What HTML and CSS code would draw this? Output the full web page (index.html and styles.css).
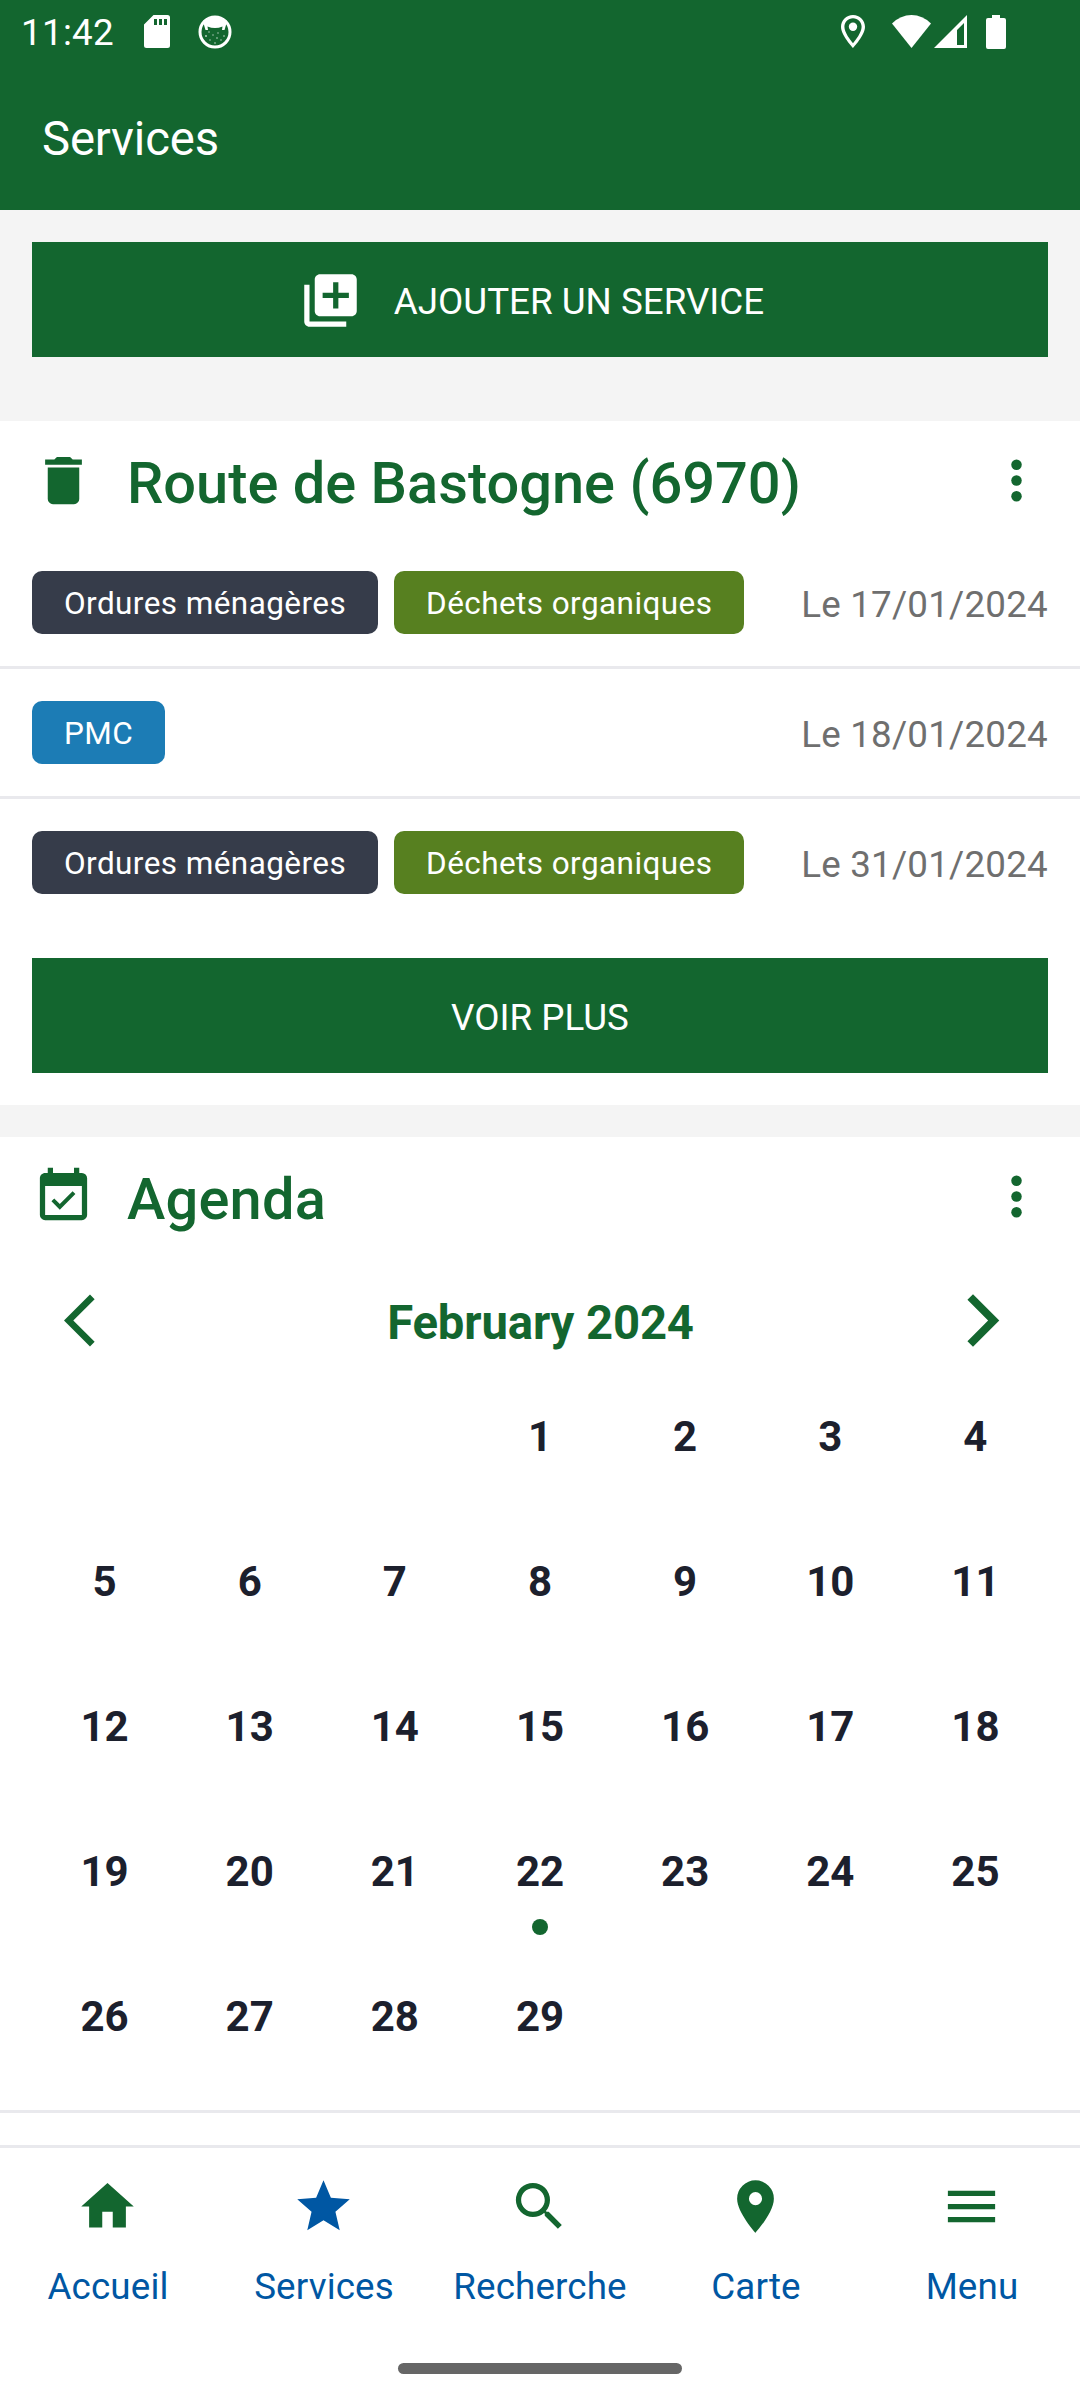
FILE: index.html
```html
<!DOCTYPE html>
<html lang="fr">
<head>
  <meta charset="UTF-8" />
  <meta name="viewport" content="width=device-width, initial-scale=1.0" />
  <title>Services</title>
  <link rel="stylesheet" href="styles.css">
</head>
<body>

  <header class="app-header">
    <div class="status-bar">
      <span class="time">11:42</span>
      <svg class="sd" viewBox="0 0 26 33"><path fill-rule="evenodd" d="M9.500 0H23.500Q26 0 26 2.500V30.500Q26 33 23.500 33H2.500Q0 33 0 30.500V9.500ZM10 4V10H13V4ZM15 4V10H18V4ZM20 4V10H23V4Z"/></svg>
      <svg class="cat" viewBox="0 0 34 34">
        <circle cx="17" cy="17" r="15" fill="none" stroke="#fff" stroke-width="3"/>
        <path d="M5 6Q17-3 29 6L28 10 26.500 15 24 15 24.500 11.500Q17 14.500 9.500 11.500L10 15 7.500 15 6 10Z"/>
        <g opacity=".75"><circle cx="11" cy="17" r=".7"/><circle cx="20" cy="18" r=".7"/><circle cx="8" cy="21" r=".9"/><circle cx="15" cy="20" r=".7"/><circle cx="26" cy="21" r=".8"/><circle cx="19" cy="23" r=".8"/><circle cx="12" cy="25" r=".7"/><circle cx="23" cy="25" r=".7"/><circle cx="17" cy="28" r=".8"/></g>
      </svg>
      <div class="status-right">
        <svg class="pin" viewBox="0 0 24 33"><path fill-rule="evenodd" d="M12 0C5.200 0 0 5.200 0 11.800 0 20.500 12 33 12 33S24 20.500 24 11.800C24 5.200 18.800 0 12 0ZM12 3.300C16.900 3.300 20.600 7 20.600 11.800 20.600 17.500 14.700 25 12 28.200 9.300 25 3.400 17.500 3.400 11.800 3.400 7 7.100 3.300 12 3.300Z"/><circle cx="12" cy="11.700" r="4.200"/></svg>
        <svg class="wifi" viewBox="0 0 39 33"><path d="M0 8.500Q8.500 0 19.500 0T39 8.500L19.500 33Z"/></svg>
        <svg class="signal" viewBox="0 0 33 33"><path fill-rule="evenodd" d="M33 0V33H0ZM30 8L23 15V30H30Z"/></svg>
        <svg class="battery" viewBox="0 0 20 34"><path d="M6 0H14V3H18Q20 3 20 5V32Q20 34 18 34H2Q0 34 0 32V5Q0 3 2 3H6Z"/></svg>
      </div>
    </div>
    <h1>Services</h1>
  </header>

  <main>
    <div class="add-service">
      <button class="btn btn-icon">
        <svg class="icon" viewBox="0 0 24 24"><path d="M4 6H2v14c0 1.100.900 2 2 2h14v-2H4V6zm16-4H8c-1.100 0-2 .900-2 2v12c0 1.100.900 2 2 2h12c1.100 0 2-.900 2-2V4c0-1.100-.900-2-2-2zm-1 9h-4v4h-2v-4H9V9h4V5h2v4h4v2z"/></svg>
        <span>AJOUTER UN SERVICE</span>
      </button>
    </div>

    <section class="card">
      <div class="card-header">
        <svg class="icon" viewBox="0 0 24 24"><path d="M19,4H15.500L14.500,3H9.500L8.500,4H5V6H19M6,19A2,2 0 0,0 8,21H16A2,2 0 0,0 18,19V7H6V19Z"/></svg>
        <h2>Route de Bastogne (6970)</h2>
        <svg class="icon" viewBox="0 0 24 24"><circle cx="12" cy="6" r="2"/><circle cx="12" cy="12" r="2"/><circle cx="12" cy="18" r="2"/></svg>
      </div>

      <div class="row">
        <span class="tag tag-dark">Ordures ménagères</span>
        <span class="tag tag-green">Déchets organiques</span>
        <span class="date">Le 17/01/2024</span>
      </div>
      <div class="row">
        <span class="tag tag-blue">PMC</span>
        <span class="date">Le 18/01/2024</span>
      </div>
      <div class="row">
        <span class="tag tag-dark">Ordures ménagères</span>
        <span class="tag tag-green">Déchets organiques</span>
        <span class="date">Le 31/01/2024</span>
      </div>

      <div class="more">
        <button class="btn"><span>VOIR PLUS</span></button>
      </div>
    </section>

    <section class="card agenda">
      <div class="card-header">
        <svg class="icon" viewBox="0 0 24 24"><path d="M19,19H5V8H19M19,3H18V1H16V3H8V1H6V3H5C3.890,3 3,3.900 3,5V19A2,2 0 0,0 5,21H19A2,2 0 0,0 21,19V5A2,2 0 0,0 19,3M16.530,11.060L15.470,10L10.590,14.880L8.470,12.760L7.410,13.820L10.590,17L16.530,11.060Z"/></svg>
        <h2>Agenda</h2>
        <svg class="icon" viewBox="0 0 24 24"><circle cx="12" cy="6" r="2"/><circle cx="12" cy="12" r="2"/><circle cx="12" cy="18" r="2"/></svg>
      </div>

      <div class="month">
        <svg class="icon" viewBox="0 0 24 24"><path d="M11.670 3.870 9.900 2.100 0 12l9.900 9.900 1.770-1.770L3.540 12z"/></svg>
        <h3>February 2024</h3>
        <svg class="icon" viewBox="0 0 24 24"><path d="M5.880 4.120 13.760 12l-7.880 7.880L8 22l10-10L8 2z"/></svg>
      </div>

      <div class="days">
        <div class="day first">1</div>
        <div class="day">2</div>
        <div class="day">3</div>
        <div class="day">4</div>
        <div class="day">5</div>
        <div class="day">6</div>
        <div class="day">7</div>
        <div class="day">8</div>
        <div class="day">9</div>
        <div class="day">10</div>
        <div class="day">11</div>
        <div class="day">12</div>
        <div class="day">13</div>
        <div class="day">14</div>
        <div class="day">15</div>
        <div class="day">16</div>
        <div class="day">17</div>
        <div class="day">18</div>
        <div class="day">19</div>
        <div class="day">20</div>
        <div class="day">21</div>
        <div class="day event">22</div>
        <div class="day">23</div>
        <div class="day">24</div>
        <div class="day">25</div>
        <div class="day">26</div>
        <div class="day">27</div>
        <div class="day">28</div>
        <div class="day">29</div>
      </div>
    </section>
  </main>

  <nav class="tabs">
    <a class="tab">
      <svg class="icon" viewBox="0 0 24 24"><path d="M10,20V14H14V20H19V12H22L12,3L2,12H5V20H10Z"/></svg>
      <span>Accueil</span>
    </a>
    <a class="tab active">
      <svg class="icon" viewBox="0 0 24 24"><path d="M12,17.270L18.180,21L16.540,13.970L22,9.240L14.810,8.620L12,2L9.190,8.620L2,9.240L7.450,13.970L5.820,21L12,17.270Z"/></svg>
      <span>Services</span>
    </a>
    <a class="tab">
      <svg class="icon" viewBox="0 0 24 24"><path d="M9.500,3A6.500,6.500 0 0,1 16,9.500C16,11.110 15.410,12.590 14.440,13.730L14.710,14H15.500L20.500,19L19,20.500L14,15.500V14.710L13.730,14.440C12.590,15.410 11.110,16 9.500,16A6.500,6.500 0 0,1 3,9.500A6.500,6.500 0 0,1 9.500,3M9.500,5C7,5 5,7 5,9.500C5,12 7,14 9.500,14C12,14 14,12 14,9.500C14,7 12,5 9.500,5Z"/></svg>
      <span>Recherche</span>
    </a>
    <a class="tab">
      <svg class="icon" viewBox="0 0 24 24"><path d="M12,11.500A2.500,2.500 0 0,1 9.500,9A2.500,2.500 0 0,1 12,6.500A2.500,2.500 0 0,1 14.500,9A2.500,2.500 0 0,1 12,11.500M12,2A7,7 0 0,0 5,9C5,14.250 12,22 12,22C12,22 19,14.250 19,9A7,7 0 0,0 12,2Z"/></svg>
      <span>Carte</span>
    </a>
    <a class="tab">
      <svg class="icon" viewBox="0 0 24 24"><path d="M3,6H21V8H3V6M3,11H21V13H3V11M3,16H21V18H3V16Z"/></svg>
      <span>Menu</span>
    </a>
  </nav>
  <div class="home-bar"><div class="home-handle"></div></div>

</body>
</html>
```

FILE: styles.css
```css
* {
  box-sizing: border-box;
  margin: 0;
  padding: 0;
}

body {
  font-family: Roboto, sans-serif;
  background: #fff;
  width: 1080px;
  height: 2400px;
  overflow: hidden;
  display: flex;
  flex-direction: column;
}

svg {
  display: block;
  flex: none;
  fill: currentColor;
}

.icon {
  width: 63px;
  height: 63px;
}

/* Header */
.app-header {
  height: 210px;
  background: #13662f;
  color: #fff;
}

.status-bar {
  display: flex;
  align-items: center;
  height: 63px;
  padding: 0 74px 0 21px;
}

.time {
  font-size: 36.75px;
  letter-spacing: 0.3px;
  line-height: 44px;
  width: 123px;
  padding-top: 3px;
}

.sd {
  width: 26px;
  height: 33px;
}

.cat {
  width: 34px;
  height: 34px;
  margin-left: 28px;
}

.status-right {
  display: flex;
  align-items: center;
  margin-left: auto;
}

.pin {
  width: 24px;
  height: 33px;
  margin-right: 27px;
}

.wifi {
  width: 39px;
  height: 33px;
  margin-right: 3px;
}

.signal {
  width: 33px;
  height: 33px;
  margin-right: 19px;
}

.battery {
  width: 20px;
  height: 34px;
}

h1 {
  font-size: 47.25px;
  font-weight: 400;
  letter-spacing: -0.15px;
  line-height: 56px;
  padding: 48px 42px 0;
}

/* Content */
main {
  background: #f4f4f4;
  height: 1935px;
}

.add-service {
  padding: 32px 32px 64px;
}

.btn {
  display: flex;
  align-items: center;
  justify-content: center;
  width: 100%;
  height: 115px;
  border: none;
  background: #13662f;
  color: #fff;
  font-family: inherit;
  font-size: 36.75px;
}

.btn span {
  padding-top: 3px;
}

.btn-icon {
  gap: 32px;
  padding: 1px 17px 0 0;
}

.btn-icon span {
  padding-top: 2px;
}

.card {
  background: #fff;
  margin-bottom: 32px;
}

.card-header {
  display: flex;
  align-items: flex-start;
  gap: 32px;
  padding: 28px 32px 22px;
  color: #13662f;
}

h2 {
  flex: 1;
  font-size: 57.75px;
  font-weight: 500;
  line-height: 68px;
}

.row {
  display: flex;
  align-items: center;
  gap: 16px;
  padding: 32px;
  border-bottom: 3px solid #e9e9ed;
}

.row:nth-child(2) {
  height: 130px;
}

.row:nth-child(4) {
  border-bottom: none;
}

.tag {
  height: 63px;
  line-height: 66px;
  padding: 0 32px;
  border-radius: 10px;
  color: #fff;
  font-size: 31.5px;
  letter-spacing: 0.42px;
}

.tag-dark {
  background: #363c4a;
}

.tag-green {
  background: #578020;
}

.tag-blue {
  background: #1c7cb5;
}

.date {
  margin-left: auto;
  padding-top: 4px;
  color: #6f6f6f;
  font-size: 36.75px;
  letter-spacing: 0.22px;
  line-height: 44px;
}

.more {
  padding: 32px;
}

/* Agenda */
.agenda {
  border-bottom: 3px solid #e9e9ed;
  padding-bottom: 21px;
  margin-bottom: 0;
  box-shadow: 0 32px 0 #fff;
}

.agenda h2 {
  letter-spacing: 0.2px;
}

.month {
  display: flex;
  align-items: center;
  justify-content: space-between;
  padding: 34px 65px 12px 64px;
  color: #13662f;
}

h3 {
  font-size: 47.25px;
  font-weight: 700;
  letter-spacing: -0.12px;
  line-height: 56px;
  padding: 4px 0 0 2px;
}

.days {
  display: grid;
  grid-template-columns: repeat(7, 1fr);
  grid-auto-rows: 145px;
  padding: 0 32px;
}

.day {
  padding-top: 48px;
  text-align: center;
  color: #1c202d;
  font-size: 42px;
  font-weight: 700;
  line-height: 49px;
}

.first {
  grid-column: 4;
}

.event::after {
  content: "";
  display: block;
  width: 16px;
  height: 16px;
  margin: 23px auto 0;
  border-radius: 50%;
  background: #13662f;
}

/* Bottom tabs */
.tabs {
  display: flex;
  border-top: 3px solid #e9e9ed;
  padding-top: 27px;
}

.tab {
  flex: 1;
  display: flex;
  flex-direction: column;
  align-items: center;
  gap: 26px;
  color: #13662f;
}

.tab .icon {
  margin-right: 2px;
}

.tab span {
  color: #0057a3;
  font-size: 36.75px;
  letter-spacing: 0.15px;
  line-height: 45px;
}

.active {
  color: #0057a3;
}

.home-bar {
  flex: 1;
  display: flex;
  align-items: flex-end;
  justify-content: center;
  padding-bottom: 26px;
}

.home-handle {
  width: 284px;
  height: 11px;
  border-radius: 6px;
  background: #666;
}
```
